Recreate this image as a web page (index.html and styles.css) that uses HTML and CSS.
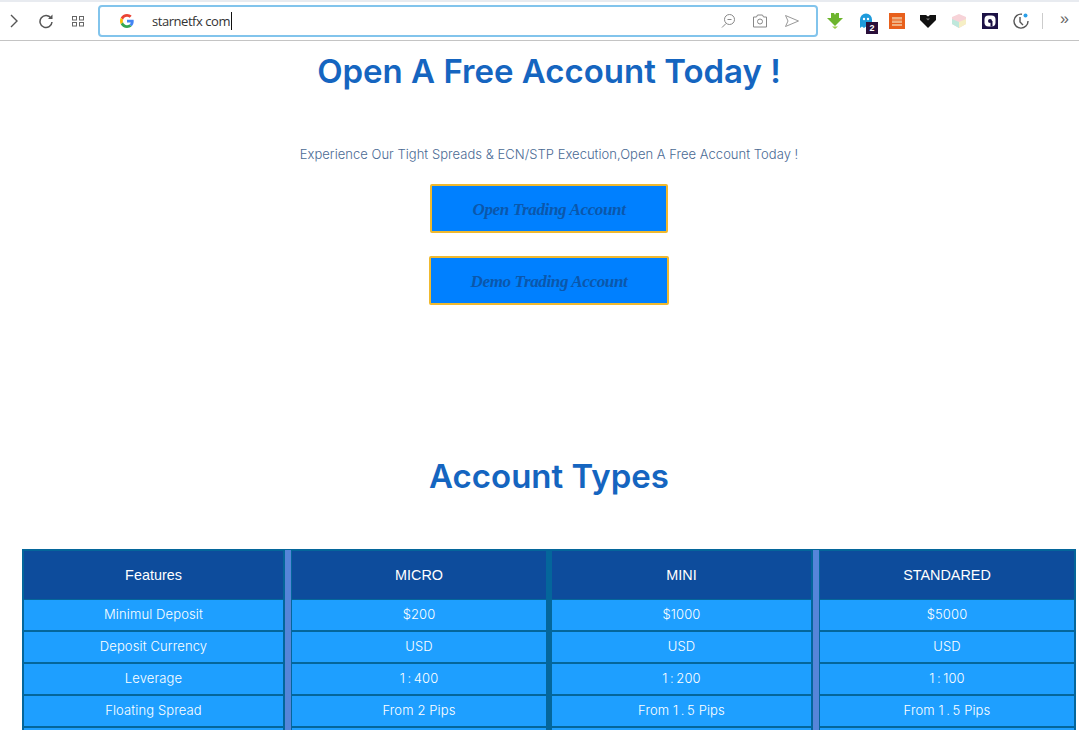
FILE: index.html
```html
<!DOCTYPE html>
<html>
<head>
    <meta charset="utf-8">
    <meta name="viewport" content="width=device-width, initial-scale=1">
    <title>Open A Free Account Today</title>
    <link rel="stylesheet" href="styles.css">
</head>
<body>
    <div class="toolbar">
        <div class="nav-icon">
            <svg width="12" height="16" viewBox="0 0 12 16"><path d="M3 2l6 6-6 6" fill="none" stroke="#555" stroke-width="1.4"/></svg>
        </div>
        <div class="nav-icon">
            <svg width="16" height="16" viewBox="0 0 16 16"><path d="M13 5.2A6 6 0 1 0 14 9" fill="none" stroke="#555" stroke-width="1.5"/><path d="M14.5 1.5v4.6H10z" fill="#555"/></svg>
        </div>
        <div class="nav-icon">
            <svg width="14" height="12" viewBox="0 0 14 12" fill="none" stroke="#666"><rect x="1.5" y="1.5" width="4" height="3.5"/><rect x="8.5" y="1.5" width="4" height="3.5"/><rect x="1.5" y="7.5" width="4" height="3.5"/><rect x="8.5" y="7.5" width="4" height="3.5"/></svg>
        </div>
        <div class="address">
            <svg class="g-logo" width="14" height="14" viewBox="0 0 48 48">
                <path fill="#ea4335" d="M24 9.5c3.5 0 6.700 1.300 9.100 3.500l6.800-6.800C35.800 2.400 30.200 0 24 0 14.600 0 6.500 5.400 2.600 13.200l7.900 6.200C12.400 13.600 17.700 9.500 24 9.500z"/>
                <path fill="#4285f4" d="M47 24.500c0-1.600-.1-3.100-.4-4.500H24v9h12.900c-.6 3-2.200 5.500-4.700 7.200l7.600 5.900C44.300 37.900 47 31.800 47 24.500z"/>
                <path fill="#fbbc05" d="M10.500 28.600c-.5-1.400-.8-3-.8-4.600s.3-3.200.8-4.600l-7.900-6.200C.9 16.500 0 20.100 0 24s.9 7.500 2.600 10.800z"/>
                <path fill="#34a853" d="M24 48c6.200 0 11.900-2 15.800-5.900l-7.600-5.900c-2.100 1.400-4.900 2.300-8.200 2.300-6.300 0-11.600-4.100-13.500-9.900l-7.900 6.200C6.500 42.600 14.600 48 24 48z"/>
            </svg>
            <span class="address-text">starnetfx com</span>
            <div class="address-tools">
                <svg width="16" height="16" viewBox="0 0 16 16" fill="none" stroke="#888"><circle cx="9.500" cy="6.500" r="5"/><path d="M7.500 6.500h4M6 10.500l-4 4"/></svg>
                <svg width="16" height="14" viewBox="0 0 16 14" fill="none" stroke="#888"><path d="M1.500 3h3l1-2h5l1 2h3v10h-13z"/><circle cx="8" cy="7.500" r="2.500"/></svg>
                <svg width="16" height="14" viewBox="0 0 16 14" fill="none" stroke="#999"><path d="M1.500 1.500L14.500 7 1.500 12.500 4 7z"/></svg>
            </div>
        </div>
        <div class="ext-icon">
            <svg width="16" height="16" viewBox="0 0 16 16"><path d="M4 0h3l1 2 1-2h3v5h4l-8 8-8-8h4z" fill="#6db52d"/><path d="M5 13.500h6L8 16z" fill="#9ccc4a"/></svg>
        </div>
        <div class="ext-icon">
            <svg width="14" height="16" viewBox="0 0 14 16"><path d="M1 6.500a6 6 0 0 1 12 0V15l-2-1.500L9 15l-2-1.500L5 15l-2-1.500L1 15z" fill="#1e9bdc"/><circle cx="5" cy="6" r="1.200" fill="#fff"/><circle cx="9" cy="6" r="1.200" fill="#fff"/></svg>
            <span class="ext-badge">2</span>
        </div>
        <div class="ext-icon">
            <svg width="16" height="16" viewBox="0 0 16 16"><rect width="16" height="16" fill="#e8601c"/><path d="M3 4h10v2.500H3zM3 7.500h10V10H3zM3 11h10v2H3z" fill="#f0b080"/></svg>
        </div>
        <div class="ext-icon">
            <svg width="16" height="14" viewBox="0 0 16 14"><path d="M0 1h6l2 1.500L10 1h6v5l-8 8-8-8z" fill="#111"/><path d="M6 4.500h4L8 6.500z" fill="#777"/></svg>
        </div>
        <div class="ext-icon">
            <svg width="16" height="14" viewBox="0 0 16 14"><path d="M8 0l7 3v7l-7 4-7-4V3z" fill="#f7d3d8"/><path d="M1 5l7 3v6l-7-4z" fill="#bfe8dc"/><path d="M15 5l-7 3v6l7-4z" fill="#f6efc5"/></svg>
        </div>
        <div class="ext-icon">
            <svg width="16" height="16" viewBox="0 0 16 16"><rect width="16" height="16" fill="#1c1145"/><rect x="2.500" y="2.500" width="11" height="11" rx="4" fill="#fff"/><circle cx="8" cy="8" r="2" fill="#1c1145"/><path d="M8.500 8h2v5.500h-2z" fill="#1c1145"/></svg>
        </div>
        <div class="ext-icon">
            <svg width="18" height="18" viewBox="0 0 18 18" fill="none" stroke="#555" stroke-width="1.400"><path d="M10 2.200A7 7 0 1 0 16 9"/><path d="M8 5v5l3 3"/><circle cx="13.500" cy="3.500" r="2" fill="#2a9fe8" stroke="none"/></svg>
        </div>
        <div class="toolbar-sep"></div>
        <div class="more">»</div>
    </div>

    <div class="page">
        <h1 class="title">Open A Free Account Today !</h1>
        <p class="subtitle">Experience Our Tight Spreads &amp; ECN/STP Execution,Open A Free Account Today !</p>
        <div class="buttons">
            <a class="account-button">Open Trading Account</a>
            <a class="account-button">Demo Trading Account</a>
        </div>
        <h2 class="section-title">Account Types</h2>

        <div class="account-table">
            <div class="column wide">
                <div class="head">Features</div>
                <div class="cell">Minimul Deposit</div>
                <div class="cell">Deposit Currency</div>
                <div class="cell">Leverage</div>
                <div class="cell">Floating Spread</div>
                <div class="cell"></div>
            </div>
            <div class="divider light"></div>
            <div class="column">
                <div class="head">MICRO</div>
                <div class="cell">$200</div>
                <div class="cell">USD</div>
                <div class="cell">1&thinsp;:&thinsp;400</div>
                <div class="cell">From 2 Pips</div>
                <div class="cell"></div>
            </div>
            <div class="divider dark"></div>
            <div class="column wide">
                <div class="head">MINI</div>
                <div class="cell">$1000</div>
                <div class="cell">USD</div>
                <div class="cell">1&thinsp;:&thinsp;200</div>
                <div class="cell">From 1&thinsp;.&thinsp;5 Pips</div>
                <div class="cell"></div>
            </div>
            <div class="divider light"></div>
            <div class="column">
                <div class="head">STANDARED</div>
                <div class="cell">$5000</div>
                <div class="cell">USD</div>
                <div class="cell">1&thinsp;:&thinsp;100</div>
                <div class="cell">From 1&thinsp;.&thinsp;5 Pips</div>
                <div class="cell"></div>
            </div>
        </div>
    </div>
</body>
</html>
```

FILE: styles.css
```css
html, body {
    height: 730px;
    overflow: hidden;
}

body {
    margin: 0;
    background-color: white;
    font-family: Inter, "Noto Sans", sans-serif;
}

.toolbar {
    display: flex;
    align-items: center;
    height: 38px;
    border-top: 2px solid #e8ebf0;
    border-bottom: 1px solid #c4c4c4;
}

.nav-icon {
    display: flex;
    justify-content: center;
    width: 28px;
    margin-right: 4px;
}

.address {
    display: flex;
    align-items: center;
    box-sizing: border-box;
    width: 720px;
    height: 32px;
    margin-left: 2px;
    margin-right: 1px;
    border: 2px solid #82c4ec;
    border-radius: 4px;
    font-family: "Open Sans", sans-serif;
    font-size: 13px;
    color: #333;
}

.g-logo {
    margin-left: 20px;
}

.address-text {
    margin-left: 18px;
    padding-right: 1px;
    border-right: 1px solid #111;
    line-height: 18px;
    letter-spacing: -0.45px;
}

.address-tools {
    display: flex;
    align-items: center;
    gap: 16px;
    margin-left: auto;
    margin-right: 16px;
}

.ext-icon {
    position: relative;
    display: flex;
    justify-content: center;
    width: 31px;
}

.ext-badge {
    position: absolute;
    left: 16px;
    top: 9px;
    width: 12px;
    height: 12px;
    background-color: #2a0f3a;
    color: white;
    font-family: "Liberation Sans", sans-serif;
    font-size: 9px;
    font-weight: bold;
    line-height: 12px;
    text-align: center;
}

.toolbar-sep {
    width: 1px;
    height: 16px;
    margin-left: 6px;
    background-color: #ccc;
}

.more {
    margin-left: 17px;
    margin-top: -4px;
    color: #666;
    font-family: "Liberation Sans", sans-serif;
    font-size: 16px;
    line-height: 16px;
}

.page {
    width: 1054px;
    margin-left: 22px;
    text-align: center;
}

.title {
    margin: 5px 0 0;
    color: #1565c0;
    font-size: 33px;
    font-weight: 600;
    line-height: 50px;
}

.subtitle {
    margin: 48px 0 0;
    color: #4a6a94;
    font-size: 13px;
    font-weight: 300;
    line-height: 20px;
    letter-spacing: 0.03px;
}

.buttons {
    display: flex;
    flex-direction: column;
    align-items: center;
    gap: 23px;
    margin-top: 20px;
}

.account-button {
    box-sizing: border-box;
    height: 49px;
    padding: 0 40px;
    background-color: #0080ff;
    border: 2px solid #f0b92e;
    border-radius: 2px;
    color: #0b57ab;
    font-family: "Liberation Serif", serif;
    font-size: 17px;
    font-style: italic;
    font-weight: bold;
    line-height: 47px;
    letter-spacing: -0.36px;
    cursor: pointer;
}

.section-title {
    margin: 146px 0 0;
    color: #1565c0;
    font-size: 33px;
    font-weight: 600;
    line-height: 50px;
}

.account-table {
    display: flex;
    margin-top: 48px;
    padding: 2px 2px 0;
    background-color: #04669b;
    color: white;
    font-size: 13px;
    font-weight: 300;
}

.column {
    display: flex;
    flex-direction: column;
    gap: 2px;
    flex: 254 1 0;
}

.column.wide {
    flex: 259 1 0;
}

.head {
    height: 48px;
    margin-bottom: -1px;
    background-color: #0d4c9c;
    font-family: "Liberation Sans", sans-serif;
    font-size: 14.4px;
    line-height: 48px;
}

.cell {
    height: 30px;
    background-color: #1e9fff;
    line-height: 28px;
    letter-spacing: 0.12px;
}

.divider {
    flex: none;
}

.divider.light {
    width: 6px;
    margin: -1px 1px 0 2px;
    background-color: #5585d9;
}

.divider.dark {
    width: 6px;
}
```
